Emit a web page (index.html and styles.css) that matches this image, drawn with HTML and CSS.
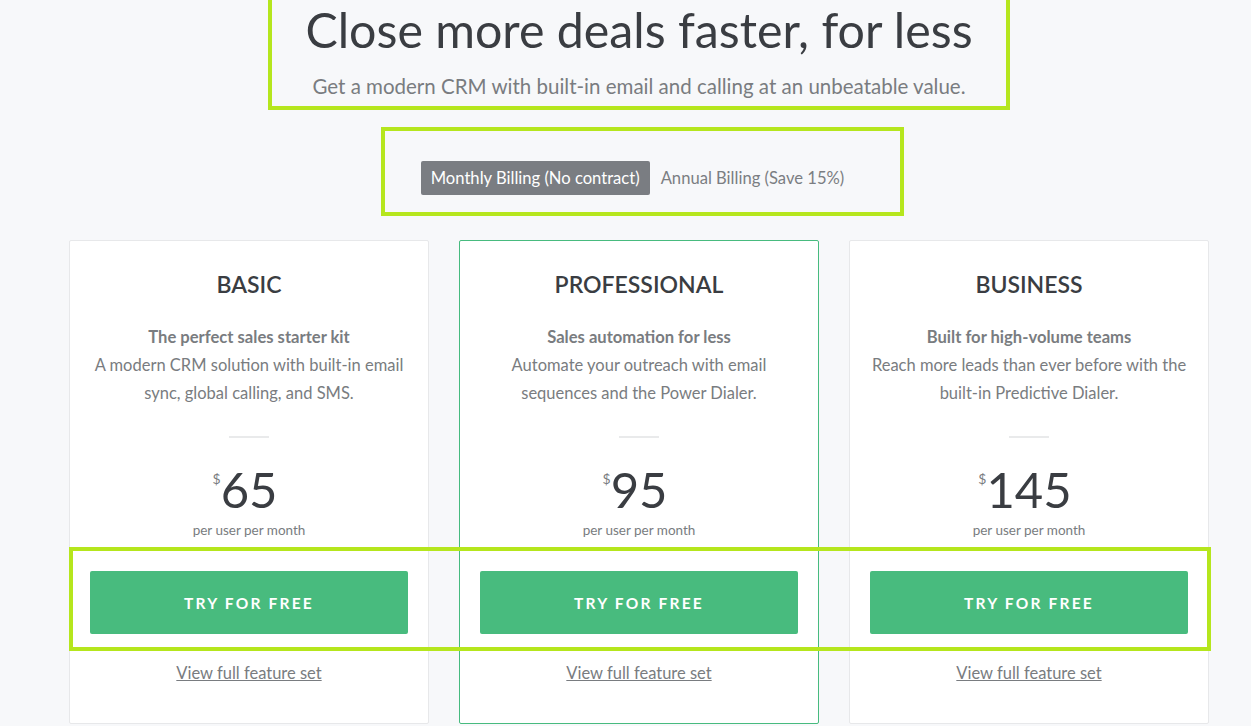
FILE: index.html
```html
<!DOCTYPE html>
<html>
<head>
<meta charset="utf-8">
<link rel="stylesheet" href="styles.css">
</head>
<body>
<div class="page">
  <header class="hero">
    <h1 class="hero-title">Close more deals faster, for less</h1>
    <p class="hero-sub">Get a modern CRM with built-in email and calling at an unbeatable value.</p>
    <div class="mark mark-hero"></div>
  </header>
  <div class="toggle-wrap">
    <div class="toggle">
      <span class="toggle-opt active">Monthly Billing (No contract)</span>
      <span class="toggle-opt">Annual Billing (Save 15%)</span>
    </div>
    <div class="mark mark-toggle"></div>
  </div>
  <div class="plans">
    <div class="plan">
      <h2 class="plan-name">BASIC</h2>
      <p class="plan-tag">The perfect sales starter kit</p>
      <p class="plan-desc">A modern CRM solution with built-in email sync, global calling, and SMS.</p>
      <hr class="plan-rule">
      <div class="price"><sup class="cur">$</sup><span class="amt">65</span></div>
      <div class="per">per user per month</div>
      <a class="btn">TRY FOR FREE</a>
      <a class="features">View full feature set</a>
    </div>
    <div class="plan featured">
      <h2 class="plan-name">PROFESSIONAL</h2>
      <p class="plan-tag">Sales automation for less</p>
      <p class="plan-desc">Automate your outreach with email sequences and the Power Dialer.</p>
      <hr class="plan-rule">
      <div class="price"><sup class="cur">$</sup><span class="amt">95</span></div>
      <div class="per">per user per month</div>
      <a class="btn">TRY FOR FREE</a>
      <a class="features">View full feature set</a>
    </div>
    <div class="plan">
      <h2 class="plan-name">BUSINESS</h2>
      <p class="plan-tag">Built for high-volume teams</p>
      <p class="plan-desc">Reach more leads than ever before with the built-in Predictive Dialer.</p>
      <hr class="plan-rule">
      <div class="price"><sup class="cur">$</sup><span class="amt">145</span></div>
      <div class="per">per user per month</div>
      <a class="btn">TRY FOR FREE</a>
      <a class="features">View full feature set</a>
    </div>
    <div class="mark mark-buttons"></div>
  </div>
</div>
</body>
</html>
```
FILE: styles.css
```css
* { box-sizing: border-box; }
html, body { margin: 0; padding: 0; }
body {
  background: #f7f8fa;
  font-family: Lato, "Open Sans", sans-serif;
  color: #333;
  width: 1251px;
  height: 726px;
  overflow: hidden;
}
.page {
  position: relative;
  width: 1251px;
  padding: 0 42px 0 69px;
}
.hero {
  position: relative;
  text-align: center;
  padding-top: 1px;
  width: 1140px;
}
.hero-title {
  margin: 0;
  font-size: 48.3px;
  font-weight: 400;
  line-height: 56px;
  color: #3a3d42;
}
.hero-sub {
  margin: 16px 0 0;
  font-size: 20.5px;
  line-height: 26px;
  color: #797c80;
}
.mark {
  position: absolute;
  border: 4px solid #b5e61d;
  pointer-events: none;
}
.mark-hero { left: 199px; top: -4px; width: 742px; height: 114px; }
.toggle-wrap {
  position: relative;
  width: 1140px;
  display: flex;
  justify-content: center;
  padding-top: 62px;
}
.toggle {
  display: flex;
  align-items: center;
  gap: 11px;
  padding-right: 13px;
}
.toggle-opt {
  font-size: 16.6px;
  line-height: 34px;
  color: #7b7e82;
  padding: 0;
}
.toggle-opt.active {
  background: #7a7d82;
  color: #fff;
  border-radius: 2px;
  padding: 0 10px;
}
.mark-toggle { left: 312px; top: 28px; width: 523px; height: 89px; }
.plans {
  position: relative;
  display: flex;
  gap: 30px;
  width: 1140px;
  margin-top: 45px;
}
.plan {
  flex: 0 0 360px;
  height: 484px;
  background: #fff;
  border: 1px solid #e7e8ea;
  border-radius: 2px;
  padding: 27px 19px 0;
  text-align: center;
  display: flex;
  flex-direction: column;
  align-items: center;
}
.plan.featured { border-color: #47bb7f; }
.plan-name {
  margin: 0;
  font-size: 23px;
  font-weight: 600;
  line-height: 32px;
  color: #3a3d42;
}
.plan-tag {
  margin: 25px 0 0;
  font-size: 16.6px;
  font-weight: 700;
  line-height: 24px;
  color: #797c80;
}
.plan-desc {
  margin: 2px 0 0;
  font-size: 16.5px;
  line-height: 28px;
  color: #797c80;
  padding: 0;
}
.plan-rule {
  width: 40px;
  height: 2px;
  border: 0;
  background: #e9eaeb;
  margin: 29px 0 0;
}
.price {
  margin-top: 26px;
  display: flex;
  align-items: flex-start;
  line-height: 50px;
  margin-right: 8px;
}
.cur {
  font-size: 14px;
  line-height: 14px;
  color: #797c80;
  margin-top: 8px;
  margin-right: 0;
}
.amt {
  font-size: 49px;
  font-weight: 400;
  color: #3a3d42;
  line-height: 50px;
}
.per {
  margin-top: 8px;
  font-size: 13.5px;
  line-height: 16px;
  color: #797c80;
}
.btn {
  display: flex;
  align-items: center;
  justify-content: center;
  width: 318px;
  height: 63px;
  margin-top: 33px;
  background: #48bb7e;
  border-radius: 2px;
  color: #fff;
  font-size: 15.5px;
  font-weight: 700;
  letter-spacing: 2.2px;
}
.features {
  margin-top: 29px;
  font-size: 16.5px;
  line-height: 20px;
  color: #797c80;
  text-decoration: underline;
}
.mark-buttons { left: 0; top: 307px; width: 1142px; height: 104px; }
```
